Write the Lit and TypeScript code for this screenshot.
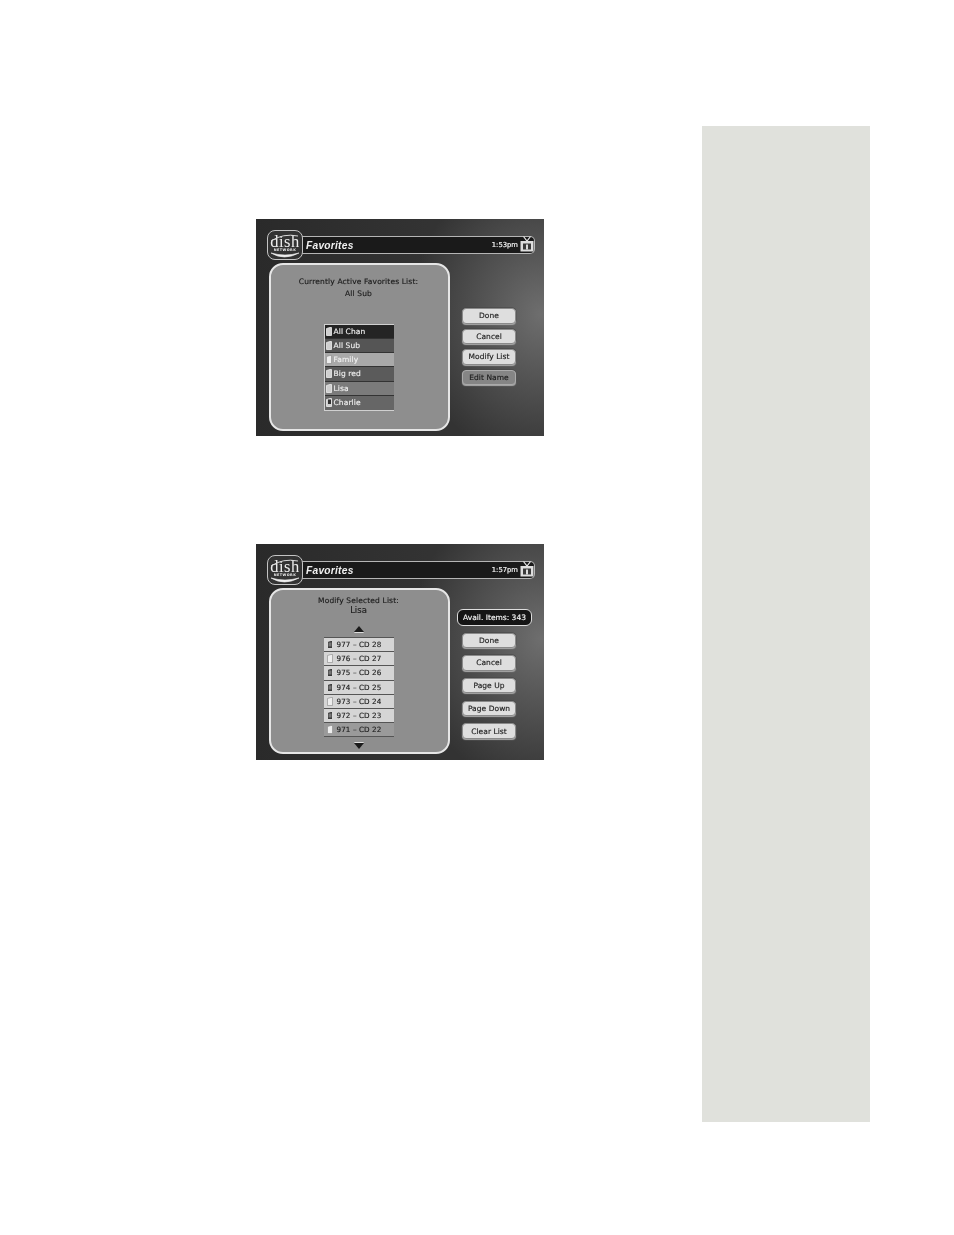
import { LitElement, html, css, svg } from "lit";
import { customElement, property } from "lit/decorators.js";

const tv = svg`<svg class="tv" width="14" height="16" viewBox="0 0 14 16">
  <path d="M3.5 0.5 L7 5 L10.5 0.5" fill="none" stroke="#e8e8e8" stroke-width="1.2"/>
  <rect x="0.5" y="5" width="13" height="10.5" fill="#dedede"/>
  <rect x="3" y="7.5" width="8" height="6" fill="#3a3a3a"/>
  <rect x="6" y="8.5" width="2" height="5" fill="#ddd"/>
</svg>`;

const doc = (kind: string) => svg`<svg class="doc" width="6" height="9" viewBox="0 0 6 9">
  <path d="M0.5 1.5 L4 0.5 H5.5 V8.5 H0.5 Z" fill="${kind === "dark" ? "#3a3a3a" : kind === "open" ? "#eee" : "#d0d0d0"}" stroke="${kind === "open" ? "#888" : "#eee"}" stroke-width="${kind === "open" ? 0.6 : 0.8}"/>
  ${kind === "dark" ? svg`<rect x="1.5" y="2.5" width="3" height="4" fill="#777"/>` : ""}
  ${kind === "charlie" ? svg`<rect x="2" y="1.5" width="3" height="4.5" fill="#333"/>` : ""}
</svg>`;

const logo = html`<div class="logo">
  <svg class="swoosh" width="36" height="30" viewBox="0 0 36 30">
    <path d="M4 11 Q16 3 31 6" fill="none" stroke="#d8d8d8" stroke-width="1"/>
    <path d="M4 23 Q17 31 32 23 Q18 27 4 23 Z" fill="#eee" stroke="#eee" stroke-width="0.6"/>
  </svg>
  <span class="dish">dish</span>
  <span class="net">NETWORK</span>
</div>`;

@customElement("tv-screen")
class TvScreen extends LitElement {
  @property() time = "";
  static styles = css`
    :host { display: block; width: 288px; }
    .screen {
      box-sizing: border-box; width: 288px; padding: 11px 9px 5px 11px;
      font-family: "DejaVu Sans", sans-serif;
      background:
        radial-gradient(ellipse 130px 150px at 285px 95px, #6e6e6e 0%, #565656 40%, rgba(50,50,50,0) 100%),
        linear-gradient(90deg, #2a2a2a 0%, #333 60%, #333 100%);
      filter: blur(0.5px);
    }
    .head { display: flex; align-items: center; height: 30px; }
    .logo {
      position: relative; box-sizing: border-box; width: 36px; height: 30px; flex: none; z-index: 1;
      background: #333; border: 1.5px solid #c4c4c4; border-radius: 8px;
      display: flex; flex-direction: column; align-items: center; color: #eee;
    }
    .swoosh { position: absolute; left: -1.5px; top: -1.5px; }
    .dish { font: 16.5px/13px "Liberation Serif", serif; margin-top: 4px; letter-spacing: 0.5px; }
    .net { font: bold 3.4px/4px "DejaVu Sans", sans-serif; letter-spacing: 0.45px; }
    .bar {
      flex: 1; height: 18px; box-sizing: border-box; margin-left: -1px;
      background: #1a1a1a; border: 1.5px solid #b5b5b5; border-left: none; border-radius: 0 5px 5px 0;
      display: flex; align-items: center; padding: 0 0 0 4px; color: #f0f0f0;
    }
    .title { font: italic bold 10.2px "Liberation Sans", sans-serif; letter-spacing: 0.25px; flex: 1; }
    .time { font: 6.8px "DejaVu Sans", sans-serif; -webkit-text-stroke: 0.2px #f0f0f0; margin-right: 2px; }
    .tv { margin-top: -3px; }
    .body { display: flex; margin-top: 3px; }
  `;
  render() {
    return html`<div class="screen">
      <div class="head">${logo}<div class="bar"><span class="title">Favorites</span><span class="time">${this.time}</span>${tv}</div></div>
      <div class="body"><slot></slot></div>
    </div>`;
  }
}

const panelStyles = css`
  :host { display: block; }
  .wrap { display: flex; font-family: "DejaVu Sans", sans-serif; -webkit-text-stroke: 0.15px currentColor; }
  .panel {
    box-sizing: border-box; width: 181px; flex: none; margin-left: 2px;
    background: #8e8e8e; border: 2px solid #e6e6e6; border-radius: 14px;
    display: flex; flex-direction: column; align-items: center; color: #1c1c1c;
  }
  .h { font-size: 7.5px; line-height: 12px; letter-spacing: 0.15px; text-align: center; margin-right: 2px; }
  .list { display: flex; flex-direction: column; width: 69px; background: #2c2c2c; border: 1px solid #d0d0d0; border-width: 1px 0 1px 1px; margin-right: 2px; }
  .row { height: 14.15px; box-sizing: border-box; display: flex; align-items: center; gap: 2px; padding-left: 1px; font-size: 7.5px; letter-spacing: 0.1px; color: #efefef; border-bottom: 1px solid #333; }
  .row:last-child { border-bottom: none; }
  .btns { flex: 1; display: flex; flex-direction: column; align-items: flex-start; padding-left: 12px; box-sizing: border-box; }
  .btn {
    box-sizing: border-box; width: 54px; height: 15.5px; flex: none;
    background: #dedede; border: 1.5px solid #8a8a8a; border-radius: 4px;
    box-shadow: 0 1px 1px #aaa, 0 0 0 0.5px #444;
    display: flex; align-items: center; justify-content: center;
    font-size: 7.5px; letter-spacing: 0.05px; color: #222; white-space: nowrap;
  }
  .btn.sel { background: #858585; border-color: #aaa; color: #1c1c1c; }
  .pill {
    box-sizing: border-box; width: 75px; height: 17px; background: #151515; border: 1.5px solid #ddd; border-radius: 6px;
    color: #f4f4f4; font-size: 7.5px; letter-spacing: 0px; display: flex; align-items: center; justify-content: center; white-space: nowrap;
  }
  .arrow { width: 0; height: 0; border-left: 5.5px solid transparent; border-right: 5.5px solid transparent; margin-right: 2px; }
  .up { border-bottom: 6px solid #1a1a1a; filter: drop-shadow(0 1px 0 #ddd); }
  .down { border-top: 6px solid #1a1a1a; filter: drop-shadow(0 -1px 0 #ddd); }
`;

@customElement("favorites-one")
class FavoritesOne extends LitElement {
  static styles = [panelStyles, css`
    .panel { height: 168px; padding-top: 11px; }
    .list { margin-top: 24px; }
    .btns { padding-top: 45px; gap: 5.1px; }
  `];
  render() {
    const rows: [string, string, string][] = [
      ["All Chan", "#242424", "light"], ["All Sub", "#555", "light"], ["Family", "#a9a9a9", "open"],
      ["Big red", "#5b5b5b", "light"], ["Lisa", "#7b7b7b", "light"], ["Charlie", "#666", "charlie"],
    ];
    return html`<div class="wrap">
      <div class="panel">
        <div class="h">Currently Active Favorites List:</div>
        <div class="h">All Sub</div>
        <div class="list">${rows.map(r => html`<div class="row" style="background:${r[1]}">${doc(r[2])}<span>${r[0]}</span></div>`)}</div>
      </div>
      <div class="btns">
        ${["Done", "Cancel", "Modify List"].map(b => html`<div class="btn">${b}</div>`)}
        <div class="btn sel">Edit Name</div>
      </div>
    </div>`;
  }
}

@customElement("favorites-two")
class FavoritesTwo extends LitElement {
  static styles = [panelStyles, css`
    :host { margin-bottom: 1px; }
    .panel { height: 166px; padding-top: 6px; }
    .h { line-height: 10px; }
    .lisa { font-size: 8.5px; line-height: 9px; margin-right: 2px; }
    .up { margin-top: 11px; }
    .list { margin-top: 5px; width: 70px; border: none; background: #555; gap: 1px; padding: 1px 0; }
    .row { height: 13.2px; background: #d5d5d5; color: #222; gap: 4px; border: none; padding-left: 3px; font-size: 7.2px; }
    .row.last { background: #9a9a9a; }
    .down { margin-top: 6px; }
    .btns { padding-top: 21px; }
    .btn { margin-bottom: 7.2px; }
    .pill { margin-bottom: 6.5px; margin-left: -5px; }
  `];
  render() {
    const rows: [string, string][] = [
      ["977 – CD 28", "dark"], ["976 – CD 27", "open"], ["975 – CD 26", "dark"], ["974 – CD 25", "dark"],
      ["973 – CD 24", "open"], ["972 – CD 23", "dark"], ["971 – CD 22", "open"],
    ];
    return html`<div class="wrap">
      <div class="panel">
        <div class="h">Modify Selected List:</div>
        <div class="lisa">Lisa</div>
        <div class="arrow up"></div>
        <div class="list">${rows.map((r, i) => html`<div class="row ${i === 6 ? "last" : ""}">${doc(r[1])}<span>${r[0]}</span></div>`)}</div>
        <div class="arrow down"></div>
      </div>
      <div class="btns">
        <div class="pill">Avail. Items: 343</div>
        ${["Done", "Cancel", "Page Up", "Page Down", "Clear List"].map(b => html`<div class="btn">${b}</div>`)}
      </div>
    </div>`;
  }
}

@customElement("app-root")
class AppRoot extends LitElement {
  static styles = css`
    :host { display: block; width: 954px; height: 1235px; background: #fff; overflow: hidden; }
    .page { display: flex; height: 1235px; }
    .shots { width: 446px; margin-left: 256px; padding-top: 219px; display: flex; flex-direction: column; gap: 108px; box-sizing: border-box; }
    .sidebar { width: 168px; height: 996px; margin-top: 126px; background: #e0e1dc; flex: none; }
  `;
  render() {
    return html`<div class="page">
      <div class="shots">
        <tv-screen time="1:53pm"><favorites-one></favorites-one></tv-screen>
        <tv-screen time="1:57pm"><favorites-two></favorites-two></tv-screen>
      </div>
      <div class="sidebar"></div>
    </div>`;
  }
}
